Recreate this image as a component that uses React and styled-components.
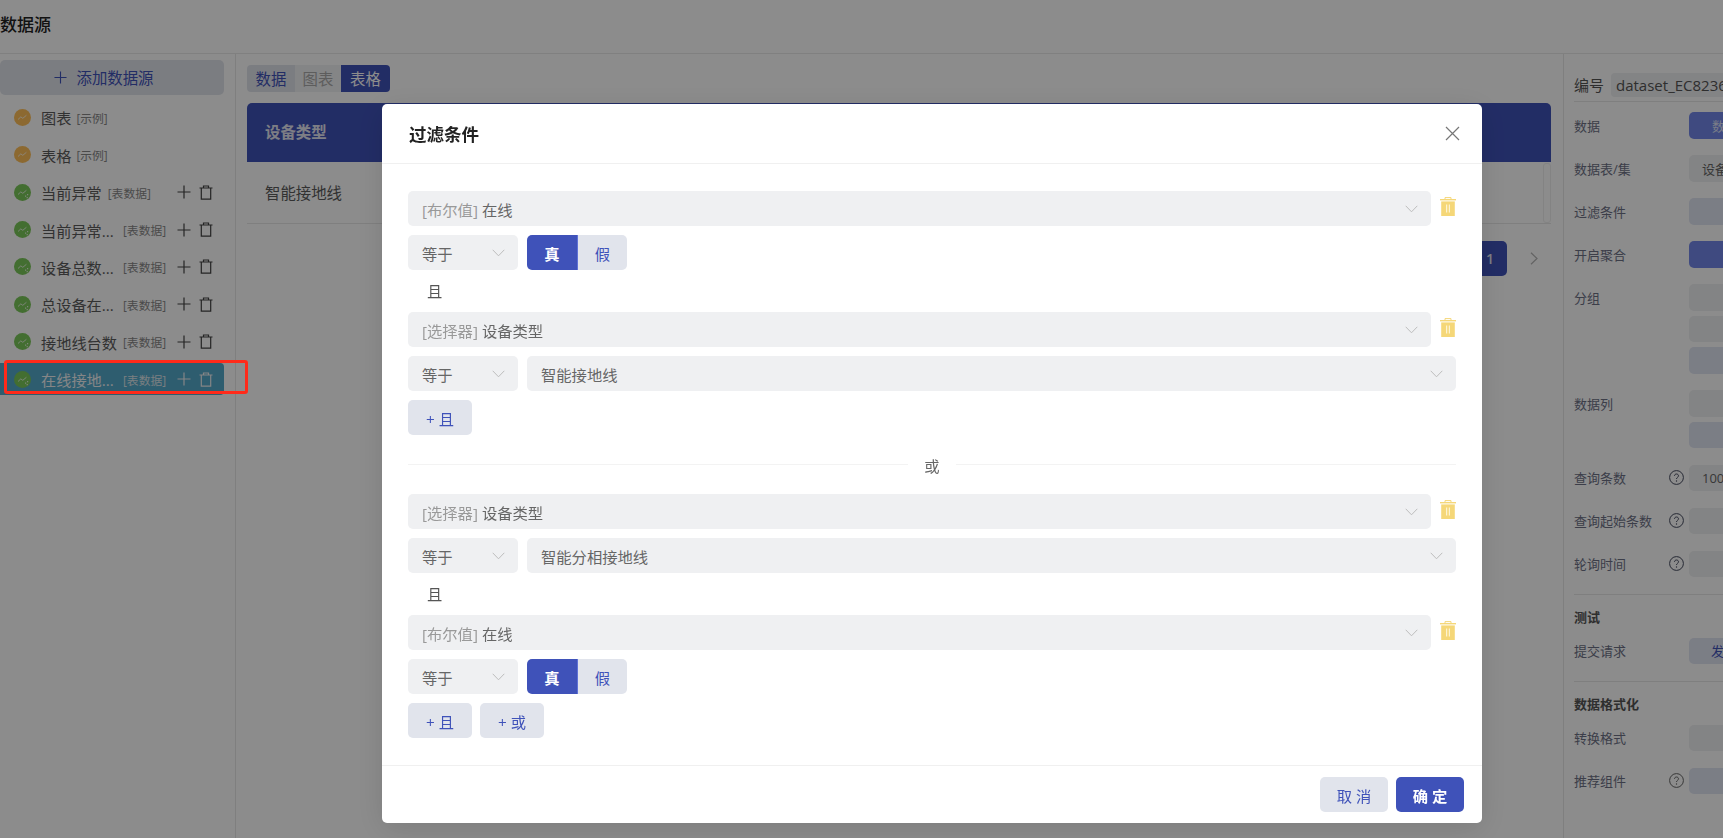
import React from "react";
import styled, { createGlobalStyle } from "styled-components";

const PRIMARY = "#3f52b9";
const LIGHT = "#e1e4ec";

const GlobalStyle = createGlobalStyle`
  html, body {
    margin: 0;
    height: 100%;
    overflow: hidden;
    background: #fff;
  }
  body, button {
    font-family: "Open Sans", "Noto Sans CJK SC", sans-serif;
  }
  * {
    box-sizing: border-box;
  }
`;

const Page = styled.div`
  width: 1723px;
  height: 838px;
  display: flex;
  flex-direction: column;
  overflow: hidden;
  color: #555;
`;

const Header = styled.header`
  height: 54px;
  flex: none;
  padding-bottom: 6px;
  display: flex;
  align-items: center;
  font-size: 17px;
  font-weight: 500;
  color: #222;
  border-bottom: 1px solid #eaeaea;
`;

const Columns = styled.div`
  flex: 1;
  display: flex;
  min-height: 0;
`;

/* left list */
const Sidebar = styled.aside`
  width: 236px;
  flex: none;
  padding: 6px 11px 0 0;
  border-right: 1px solid #e8e8e8;
  display: flex;
  flex-direction: column;
  gap: 5.4px;
`;

const AddSource = styled.div`
  height: 35px;
  margin-bottom: 1px;
  display: flex;
  align-items: center;
  justify-content: center;
  gap: 10px;
  padding-right: 17px;
  background: ${LIGHT};
  border-radius: 5px;
  color: ${PRIMARY};
  font-size: 15.4px;
`;

const Row = styled.div`
  height: 32px;
  flex: none;
  display: flex;
  align-items: center;
  padding: 0 11px 0 14px;
  border-radius: 0 4px 4px 0;
  background: ${(p) => (p.$active ? "#54a9cb" : "transparent")};
`;

const Name = styled.span`
  margin-left: 10px;
  flex: none;
  min-width: ${(p) => (p.$wide ? "76px" : "0")};
  font-size: 15.2px;
  white-space: nowrap;
  color: ${(p) => (p.$active ? "#f2f4f5" : "#5c5c5c")};
`;

const Tag = styled.span`
  margin-left: ${(p) => (p.$sample ? 5 : 6)}px;
  font-size: 11.8px;
  white-space: nowrap;
  color: ${(p) => (p.$active ? "#dfe6ea" : "#888")};
`;

const Actions = styled.div`
  margin-left: auto;
  display: flex;
  align-items: center;
  gap: 8px;
  color: ${(p) => (p.$active ? "#f0f2f3" : "#444")};
`;

/* middle */
const Main = styled.main`
  flex: 1;
  min-width: 0;
  padding: 11px 12px 0 11px;
`;

const Tabs = styled.div`
  display: inline-flex;
  height: 27px;
  border-radius: 4px;
  overflow: hidden;
  vertical-align: top;
`;

const TabItem = styled.div`
  width: ${(p) => p.$w}px;
  display: flex;
  align-items: center;
  justify-content: center;
  font-size: 15.4px;
  background: ${(p) => (p.$tone === "on" ? PRIMARY : p.$tone === "soft" ? LIGHT : "#f1f2f4")};
  color: ${(p) => (p.$tone === "on" ? "#fff" : p.$tone === "soft" ? PRIMARY : "#aaa")};
`;

const TableHead = styled.div`
  margin-top: 11px;
  height: 59px;
  padding: 0 0 2px 18px;
  display: flex;
  align-items: center;
  background: ${PRIMARY};
  border-radius: 5px 5px 0 0;
  color: #e4e6f2;
  font-size: 15.4px;
  font-weight: 700;
`;

const TableRow = styled.div`
  height: 62px;
  display: flex;
  align-items: center;
  justify-content: space-between;
  padding-left: 18px;
  border-bottom: 1px solid #e8e8e8;
  font-size: 15.4px;
  color: #5c5c5c;
`;

const ScrollEdge = styled.div`
  width: 8px;
  height: 60px;
  border: 1px solid #efefef;
  border-radius: 3px;
`;

const Pager = styled.div`
  margin-top: 17px;
  display: flex;
  justify-content: flex-end;
  align-items: center;
  gap: 23px;
  padding-right: 13px;
`;

const PageButton = styled.div`
  width: 35px;
  height: 35px;
  display: flex;
  align-items: center;
  justify-content: flex-end;
  padding-right: 13px;
  background: ${PRIMARY};
  border-radius: 5px;
  color: #e4e6f2;
  font-size: 14px;
  font-weight: 600;
`;

/* right panel */
const Settings = styled.aside`
  width: 160px;
  flex: none;
  overflow: hidden;
  border-left: 1px solid #e8e8e8;
  padding-left: 10px;
`;

const SerialRow = styled.div`
  height: 48px;
  padding: 19px 0 5px;
  display: flex;
  align-items: center;
  gap: 7px;
  border-bottom: 1px solid #e8e8e8;
  font-size: 15px;
  color: #555;
  white-space: nowrap;
`;

const SerialValue = styled.div`
  height: 24px;
  padding-left: 5px;
  flex: none;
  width: 200px;
  line-height: 24px;
  background: #eff0f2;
  border-radius: 4px;
`;

const Section = styled.section`
  padding-top: ${(p) => (p.$titled ? 12 : 10)}px;
  border-bottom: ${(p) => (p.$last ? "none" : "1px solid #e8e8e8")};
`;

const SectionTitle = styled.div`
  height: 20px;
  margin-bottom: 11px;
  line-height: 20px;
  font-size: 13px;
  font-weight: 700;
  color: #555;
`;

const Field = styled.div`
  display: flex;
  margin-bottom: 16.5px;
`;

const FieldLabel = styled.div`
  width: 115px;
  height: 26px;
  flex: none;
  display: flex;
  align-items: center;
  justify-content: space-between;
  padding-right: 5px;
  font-size: 13px;
  color: #6d7186;
  white-space: nowrap;
`;

const Controls = styled.div`
  display: flex;
  flex-direction: column;
  gap: 5px;
`;

const CONTROL_TONES = {
  blue: { bg: "#7488ea", fg: "#dfe3f7" },
  grey: { bg: "#eff0f2", fg: "#666" },
  soft: { bg: "#e1e5f3", fg: PRIMARY },
};

const Control = styled.div`
  width: 120px;
  height: 26.5px;
  padding-left: ${(p) => p.$pad || 13}px;
  display: flex;
  align-items: center;
  background: ${(p) => CONTROL_TONES[p.$tone].bg};
  color: ${(p) => CONTROL_TONES[p.$tone].fg};
  border-radius: 5px;
  font-size: 13px;
  white-space: nowrap;
`;

/* dialog */
const Overlay = styled.div`
  position: fixed;
  inset: 0;
  z-index: 10;
  padding: 104px 0 0 382px;
  background: rgba(0, 0, 0, 0.45);
`;

const Dialog = styled.div`
  width: 1100px;
  height: 719px;
  display: flex;
  flex-direction: column;
  background: #fff;
  border-radius: 5px;
  box-shadow: 0 6px 30px rgba(0, 0, 0, 0.12);
`;

const DialogHead = styled.div`
  height: 60px;
  flex: none;
  display: flex;
  align-items: center;
  justify-content: space-between;
  padding: 0 22px 0 27px;
  border-bottom: 1px solid #f0f0f0;
  font-size: 17.5px;
  font-weight: 700;
  color: #222;
`;

const DialogBody = styled.div`
  flex: 1;
  padding: 27px 26px 0;
  display: flex;
  flex-direction: column;
  gap: 9px;
`;

const DialogFoot = styled.div`
  height: 58px;
  flex: none;
  display: flex;
  align-items: center;
  justify-content: flex-end;
  gap: 8px;
  padding-right: 18px;
  border-top: 1px solid #f0f0f0;
`;

const FieldRow = styled.div`
  display: flex;
  align-items: center;
  gap: 9px;
`;

const Select = styled.div`
  height: 35px;
  width: ${(p) => (p.$w ? `${p.$w}px` : "auto")};
  flex: ${(p) => (p.$w ? "none" : "1")};
  display: flex;
  align-items: center;
  justify-content: space-between;
  padding: 0 13px 0 14px;
  background: #eff0f2;
  border-radius: 5px;
  font-size: 15.3px;
  color: #666;
`;

const Prefix = styled.span`
  margin-right: 4px;
  color: #999;
`;

const BoolGroup = styled.div`
  display: flex;
  height: 35px;
  border-radius: 5px;
  overflow: hidden;
`;

const BoolOption = styled.div`
  width: ${(p) => (p.$on ? 51 : 49)}px;
  display: flex;
  align-items: center;
  justify-content: center;
  font-size: 15.3px;
  font-weight: ${(p) => (p.$on ? 700 : 400)};
  background: ${(p) => (p.$on ? PRIMARY : LIGHT)};
  color: ${(p) => (p.$on ? "#fff" : PRIMARY)};
  border-right: ${(p) => (p.$on ? "1px solid #5f72d6" : "none")};
`;

const Joiner = styled.div`
  height: 24px;
  line-height: 24px;
  padding-left: 19px;
  font-size: 15.3px;
  color: #555;
`;

const Button = styled.button`
  height: 35px;
  width: ${(p) => p.$w}px;
  padding: 0;
  border: none;
  border-radius: 5px;
  font-size: 15.3px;
  font-weight: ${(p) => (p.$primary ? 700 : 400)};
  background: ${(p) => (p.$primary ? PRIMARY : LIGHT)};
  color: ${(p) => (p.$primary ? "#fff" : PRIMARY)};
`;

const ButtonRow = styled.div`
  display: flex;
  gap: 8px;
`;

const OrDivider = styled.div`
  height: 19px;
  margin: 11px 0;
  display: flex;
  align-items: center;
  gap: 16px;
  font-size: 15.3px;
  color: #666;
  &::before,
  &::after {
    content: "";
    flex: 1;
    height: 1px;
    background: #f3f3f3;
  }
`;

const RedMark = styled.div`
  position: fixed;
  z-index: 20;
  left: 4px;
  top: 360px;
  width: 244px;
  height: 34px;
  border: 3px solid #ff2a1a;
  border-radius: 3px;
`;

const Chevron = ({ color = "#bdbdbd" }) => (
  <svg width="13" height="8" viewBox="0 0 13 8" fill="none">
    <path d="M.7.8l5.8 6 5.8-6" stroke={color} strokeWidth="1" />
  </svg>
);

const ChevronRight = () => (
  <svg width="8" height="13" viewBox="0 0 8 13" fill="none">
    <path d="M1 .8l6 5.7-6 5.7" stroke="#b5b5b5" strokeWidth="1.2" />
  </svg>
);

const PlusIcon = ({ size = 14, color = "currentColor" }) => (
  <svg width={size} height={size} viewBox="0 0 14 14" fill="none">
    <path d="M7 .5v13M.5 7h13" stroke={color} strokeWidth="1.2" />
  </svg>
);

const BinIcon = () => (
  <svg width="14" height="15" viewBox="0 0 14 15" fill="none" stroke="currentColor" strokeWidth="1.2">
    <path d="M.5 3h13M4.5 3V1h5v2M2.3 3v11.2h9.4V3" />
  </svg>
);

const YellowBin = () => (
  <svg width="16" height="19" viewBox="0 0 16 19" style={{ marginTop: -4, flex: "none" }}>
    <path d="M5 2V.6h6V2" fill="none" stroke="#f5d778" strokeWidth="1" />
    <path d="M0 2h16v1.4H0z" fill="#f5d778" />
    <path d="M1.2 4.4h13.6V19H1.2z" fill="#f5d778" />
    <path d="M6 7.5h1.2v8H6zM8.8 7.5H10v8H8.8z" fill="#fdf3d0" />
  </svg>
);

const CloseIcon = () => (
  <svg width="15" height="15" viewBox="0 0 15 15" fill="none">
    <path d="M1 1l13 13M14 1L1 14" stroke="#777" strokeWidth="1.2" />
  </svg>
);

const HelpIcon = ({ color = "#454a5e" }) => (
  <svg width="15" height="15" viewBox="0 0 15 15" fill="none">
    <circle cx="7.5" cy="7.5" r="6.9" stroke={color} strokeWidth="1" />
    <path
      d="M5.5 5.9c0-1.2.9-1.9 2-1.9s2 .7 2 1.8c0 1.5-2 1.6-2 3.2"
      stroke={color}
      strokeWidth="1"
    />
    <circle cx="7.5" cy="11" r=".7" fill={color} />
  </svg>
);

const SourceIcon = ({ kind }) => {
  const fill = kind === "sample" ? "#ffc05a" : "#7bc85a";
  return (
    <svg width="17" height="17" viewBox="0 0 17 17" style={{ flex: "none" }}>
      <circle cx="8.5" cy="8.5" r="8.5" fill={fill} />
      <path
        d="M4 10.5l2.8-2.6 2 1.4 3.6-3"
        fill="none"
        stroke="#fff"
        strokeOpacity=".75"
        strokeWidth="1"
      />
      {kind !== "sample" && (
        <path d="M11 11.5h1.2v1.2H11zM13 10h1.2v1.2H13zM12.6 13h1.2v1.2h-1.2z" fill="#fff" fillOpacity=".8" />
      )}
    </svg>
  );
};

const SOURCES = [
  { name: "图表", tag: "[示例]", kind: "sample" },
  { name: "表格", tag: "[示例]", kind: "sample" },
  { name: "当前异常", tag: "[表数据]" },
  { name: "当前异常...", tag: "[表数据]", wide: true },
  { name: "设备总数...", tag: "[表数据]", wide: true },
  { name: "总设备在...", tag: "[表数据]", wide: true },
  { name: "接地线台数", tag: "[表数据]", wide: true },
  { name: "在线接地...", tag: "[表数据]", wide: true, active: true },
];

const FIELDS = [
  { label: "数据", items: [{ tone: "blue", text: "数据", pad: 23 }] },
  { label: "数据表/集", items: [{ tone: "grey", text: "设备" }] },
  { label: "过滤条件", items: [{ tone: "soft" }] },
  { label: "开启聚合", items: [{ tone: "blue" }] },
  { label: "分组", items: [{ tone: "grey" }, { tone: "grey" }, { tone: "soft" }] },
  { label: "数据列", items: [{ tone: "grey" }, { tone: "soft" }] },
  { label: "查询条数", help: true, items: [{ tone: "grey", text: "100" }] },
  { label: "查询起始条数", help: true, items: [{ tone: "grey" }] },
  { label: "轮询时间", help: true, items: [{ tone: "grey" }] },
];

const renderField = (field) => (
  <Field key={field.label}>
    <FieldLabel>
      {field.label}
      {field.help && <HelpIcon color={field.helpColor} />}
    </FieldLabel>
    <Controls>
      {field.items.map((item, i) => (
        <Control key={i} $tone={item.tone} $pad={item.pad}>
          {item.text}
        </Control>
      ))}
    </Controls>
  </Field>
);

const ConditionSelect = ({ prefix, value }) => (
  <FieldRow>
    <Select>
      <span>
        <Prefix>{prefix}</Prefix>
        {value}
      </span>
      <Chevron />
    </Select>
    <YellowBin />
  </FieldRow>
);

const Equals = () => (
  <Select $w={110}>
    等于
    <Chevron />
  </Select>
);

const BoolRow = () => (
  <FieldRow>
    <Equals />
    <BoolGroup>
      <BoolOption $on>真</BoolOption>
      <BoolOption>假</BoolOption>
    </BoolGroup>
  </FieldRow>
);

const ValueRow = ({ value }) => (
  <FieldRow>
    <Equals />
    <Select>
      {value}
      <Chevron />
    </Select>
  </FieldRow>
);

export default function App() {
  return (
    <>
      <GlobalStyle />
      <Page>
        <Header>数据源</Header>
        <Columns>
          <Sidebar>
            <AddSource>
              <PlusIcon size={13} />
              添加数据源
            </AddSource>
            {SOURCES.map((s, i) => (
              <Row key={i} $active={s.active}>
                <SourceIcon kind={s.kind} />
                <Name $active={s.active} $wide={s.wide}>{s.name}</Name>
                <Tag $active={s.active} $sample={s.kind === "sample"}>{s.tag}</Tag>
                {s.kind !== "sample" && (
                  <Actions $active={s.active}>
                    <PlusIcon />
                    <BinIcon />
                  </Actions>
                )}
              </Row>
            ))}
          </Sidebar>

          <Main>
            <Tabs>
              <TabItem $w={48} $tone="soft">数据</TabItem>
              <TabItem $w={46}>图表</TabItem>
              <TabItem $w={49} $tone="on">表格</TabItem>
            </Tabs>
            <TableHead>设备类型</TableHead>
            <TableRow>
              智能接地线
              <ScrollEdge />
            </TableRow>
            <Pager>
              <PageButton>1</PageButton>
              <ChevronRight />
            </Pager>
          </Main>

          <Settings>
            <SerialRow>
              编号
              <SerialValue>dataset_EC82366</SerialValue>
            </SerialRow>
            <Section>{FIELDS.map(renderField)}</Section>
            <Section $titled>
              <SectionTitle>测试</SectionTitle>
              {renderField({ label: "提交请求", items: [{ tone: "soft", text: "发送", pad: 22 }] })}
            </Section>
            <Section $titled $last>
              <SectionTitle>数据格式化</SectionTitle>
              {renderField({ label: "转换格式", items: [{ tone: "grey" }] })}
              {renderField({ label: "推荐组件", help: true, helpColor: "#666", items: [{ tone: "soft" }] })}
            </Section>
          </Settings>
        </Columns>
      </Page>

      <Overlay>
        <Dialog>
          <DialogHead>
            过滤条件
            <CloseIcon />
          </DialogHead>
          <DialogBody>
            <ConditionSelect prefix="[布尔值]" value="在线" />
            <BoolRow />
            <Joiner>且</Joiner>
            <ConditionSelect prefix="[选择器]" value="设备类型" />
            <ValueRow value="智能接地线" />
            <ButtonRow>
              <Button $w={64}>+ 且</Button>
            </ButtonRow>
            <OrDivider>或</OrDivider>
            <ConditionSelect prefix="[选择器]" value="设备类型" />
            <ValueRow value="智能分相接地线" />
            <Joiner>且</Joiner>
            <ConditionSelect prefix="[布尔值]" value="在线" />
            <BoolRow />
            <ButtonRow>
              <Button $w={64}>+ 且</Button>
              <Button $w={64}>+ 或</Button>
            </ButtonRow>
          </DialogBody>
          <DialogFoot>
            <Button $w={68}>取 消</Button>
            <Button $w={68} $primary>确 定</Button>
          </DialogFoot>
        </Dialog>
      </Overlay>
      <RedMark />
    </>
  );
}
